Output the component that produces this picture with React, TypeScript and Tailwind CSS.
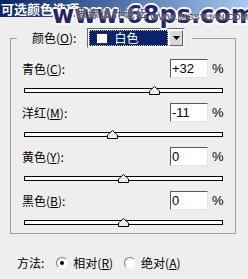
import React from "react";

const cjk = "font-['Noto_Sans_CJK_SC','Noto_Sans',sans-serif]";

interface SliderRowProps {
  label: string;
  hotkey: string;
  value: number;
  text: string;
}

function Thumb() {
  return (
    <svg width="11" height="9" viewBox="0 0 11 9" className="block">
      <path d="M5.5 0.5 L10.5 5 L10.5 8.5 L0.5 8.5 L0.5 5 Z" fill="#ececec" stroke="#000" strokeWidth="1" />
      <path d="M1.5 5.3 L5.5 1.7 L9.5 5.3" fill="none" stroke="#fff" strokeWidth="1" />
    </svg>
  );
}

function SliderRow({ label, hotkey, value, text }: SliderRowProps) {
  const center = 98 + value * 0.99;
  return (
    <div className="flex flex-col">
      <div className="flex items-center h-[19px]">
        <div className={`flex-1 pl-[11px] text-[12px] leading-none text-black ${cjk}`}>
          {label}(<span className="underline">{hotkey}</span>):
        </div>
        <div className="w-[38px] h-[19px] bg-white border-t border-l border-t-[#5a5a5a] border-l-[#5a5a5a] border-b border-r border-b-[#e4e4e4] border-r-[#e4e4e4] flex items-center pl-[1px] font-['Liberation_Sans',sans-serif] text-[13px] text-black">
          {text}
        </div>
        <div className="w-[27px] pl-[4px] font-['Liberation_Sans',sans-serif] text-[13px] text-black">%</div>
      </div>
      <div className="relative mt-[10px] mb-[10px] ml-[13px] w-[199px] h-[5px] border border-black bg-white">
        <div className="absolute top-[-3px]" style={{ left: `${center - 5.5}px` }}>
          <Thumb />
        </div>
      </div>
    </div>
  );
}

function Radio({ checked }: { checked: boolean }) {
  return (
    <span className="w-[12px] h-[12px] rounded-full bg-white border border-t-[#7a7a7a] border-l-[#7a7a7a] border-b-[#f4f4f4] border-r-[#f4f4f4] flex items-center justify-center">
      {checked && <span className="w-[4px] h-[4px] rounded-full bg-black" />}
    </span>
  );
}

export default function App() {
  return (
    <div className={`w-[248px] h-[279px] bg-[#eeeeee] overflow-hidden relative ${cjk}`}>
      {/* Title bar */}
      <div className="h-[17px] bg-gradient-to-r from-[#0a246a] to-[#a6caf0] flex items-center pl-[1px]">
        <span className="text-white font-bold text-[13px] leading-none">可选颜色选项</span>
      </div>

      {/* Watermarks over the title */}
      <div className="absolute left-[52px] top-[1px] font-['DejaVu_Sans',sans-serif] font-bold text-[24px] leading-[28px] text-[#26246a] [text-shadow:2px_0_0_#fff,-2px_0_0_#fff,0_2px_0_#fff,0_-2px_0_#fff,1px_1px_0_#fff,-1px_-1px_0_#fff,1px_-1px_0_#fff,-1px_1px_0_#fff]">
        www.68ps.com
      </div>
      <div className="absolute left-[76px] top-[8px] text-[11px] leading-none tracking-[1px] text-[#4a4a4a] [text-shadow:0_0_2px_#fff]">
        思缘设计论坛
      </div>
      <div className="absolute left-[150px] top-[13px] font-['Liberation_Sans',sans-serif] text-[9px] leading-none text-[#333] [text-shadow:0_0_2px_#fff]">
        WWW.MISSYUAN.COM
      </div>

      {/* Group box */}
      <fieldset className="mt-[11px] ml-[10px] w-[226px] h-[206px] border border-[#a0a0a0] px-0 pt-[11px]">
        <legend className="ml-[6px] flex items-center h-[20px]">
          <span className="pl-[15px] text-[12px] leading-none text-black">
            颜色(<span className="underline">O</span>):
          </span>
          <div className="ml-[11px] mr-[7px] w-[98px] h-[20px] flex border-t border-l border-t-[#6a6a6a] border-l-[#6a6a6a] border-b border-r border-b-[#f4f4f4] border-r-[#f4f4f4] bg-white">
            <div className="flex-1 m-[1px] bg-[#0a246a] border border-dotted border-[#c8c8a0] flex items-center pl-[6px]">
              <span className="w-[12px] h-[11px] bg-white border border-[#333]" />
              <span className="ml-[6px] text-white text-[12px] leading-none">白色</span>
            </div>
            <div className="w-[14px] my-[1px] mr-[1px] bg-[#d8d8d8] border border-t-white border-l-white border-b-[#606060] border-r-[#606060] flex items-center justify-center">
              <svg width="7" height="4" viewBox="0 0 7 4">
                <path d="M0 0 H7 L3.5 4 Z" fill="#000" />
              </svg>
            </div>
          </div>
        </legend>

        <SliderRow label="青色" hotkey="C" value={32} text="+32" />
        <SliderRow label="洋红" hotkey="M" value={-11} text="-11" />
        <SliderRow label="黄色" hotkey="Y" value={0} text="0" />
        <SliderRow label="黑色" hotkey="B" value={0} text="0" />
      </fieldset>

      {/* Method */}
      <div className="flex items-center mt-[23px] pl-[17px] text-[12px] leading-none text-black">
        <span>方法:</span>
        <span className="ml-[12px]"><Radio checked /></span>
        <span className="ml-[5px]">相对(<span className="underline">R</span>)</span>
        <span className="ml-[11px]"><Radio checked={false} /></span>
        <span className="ml-[5px]">绝对(<span className="underline">A</span>)</span>
      </div>
    </div>
  );
}
